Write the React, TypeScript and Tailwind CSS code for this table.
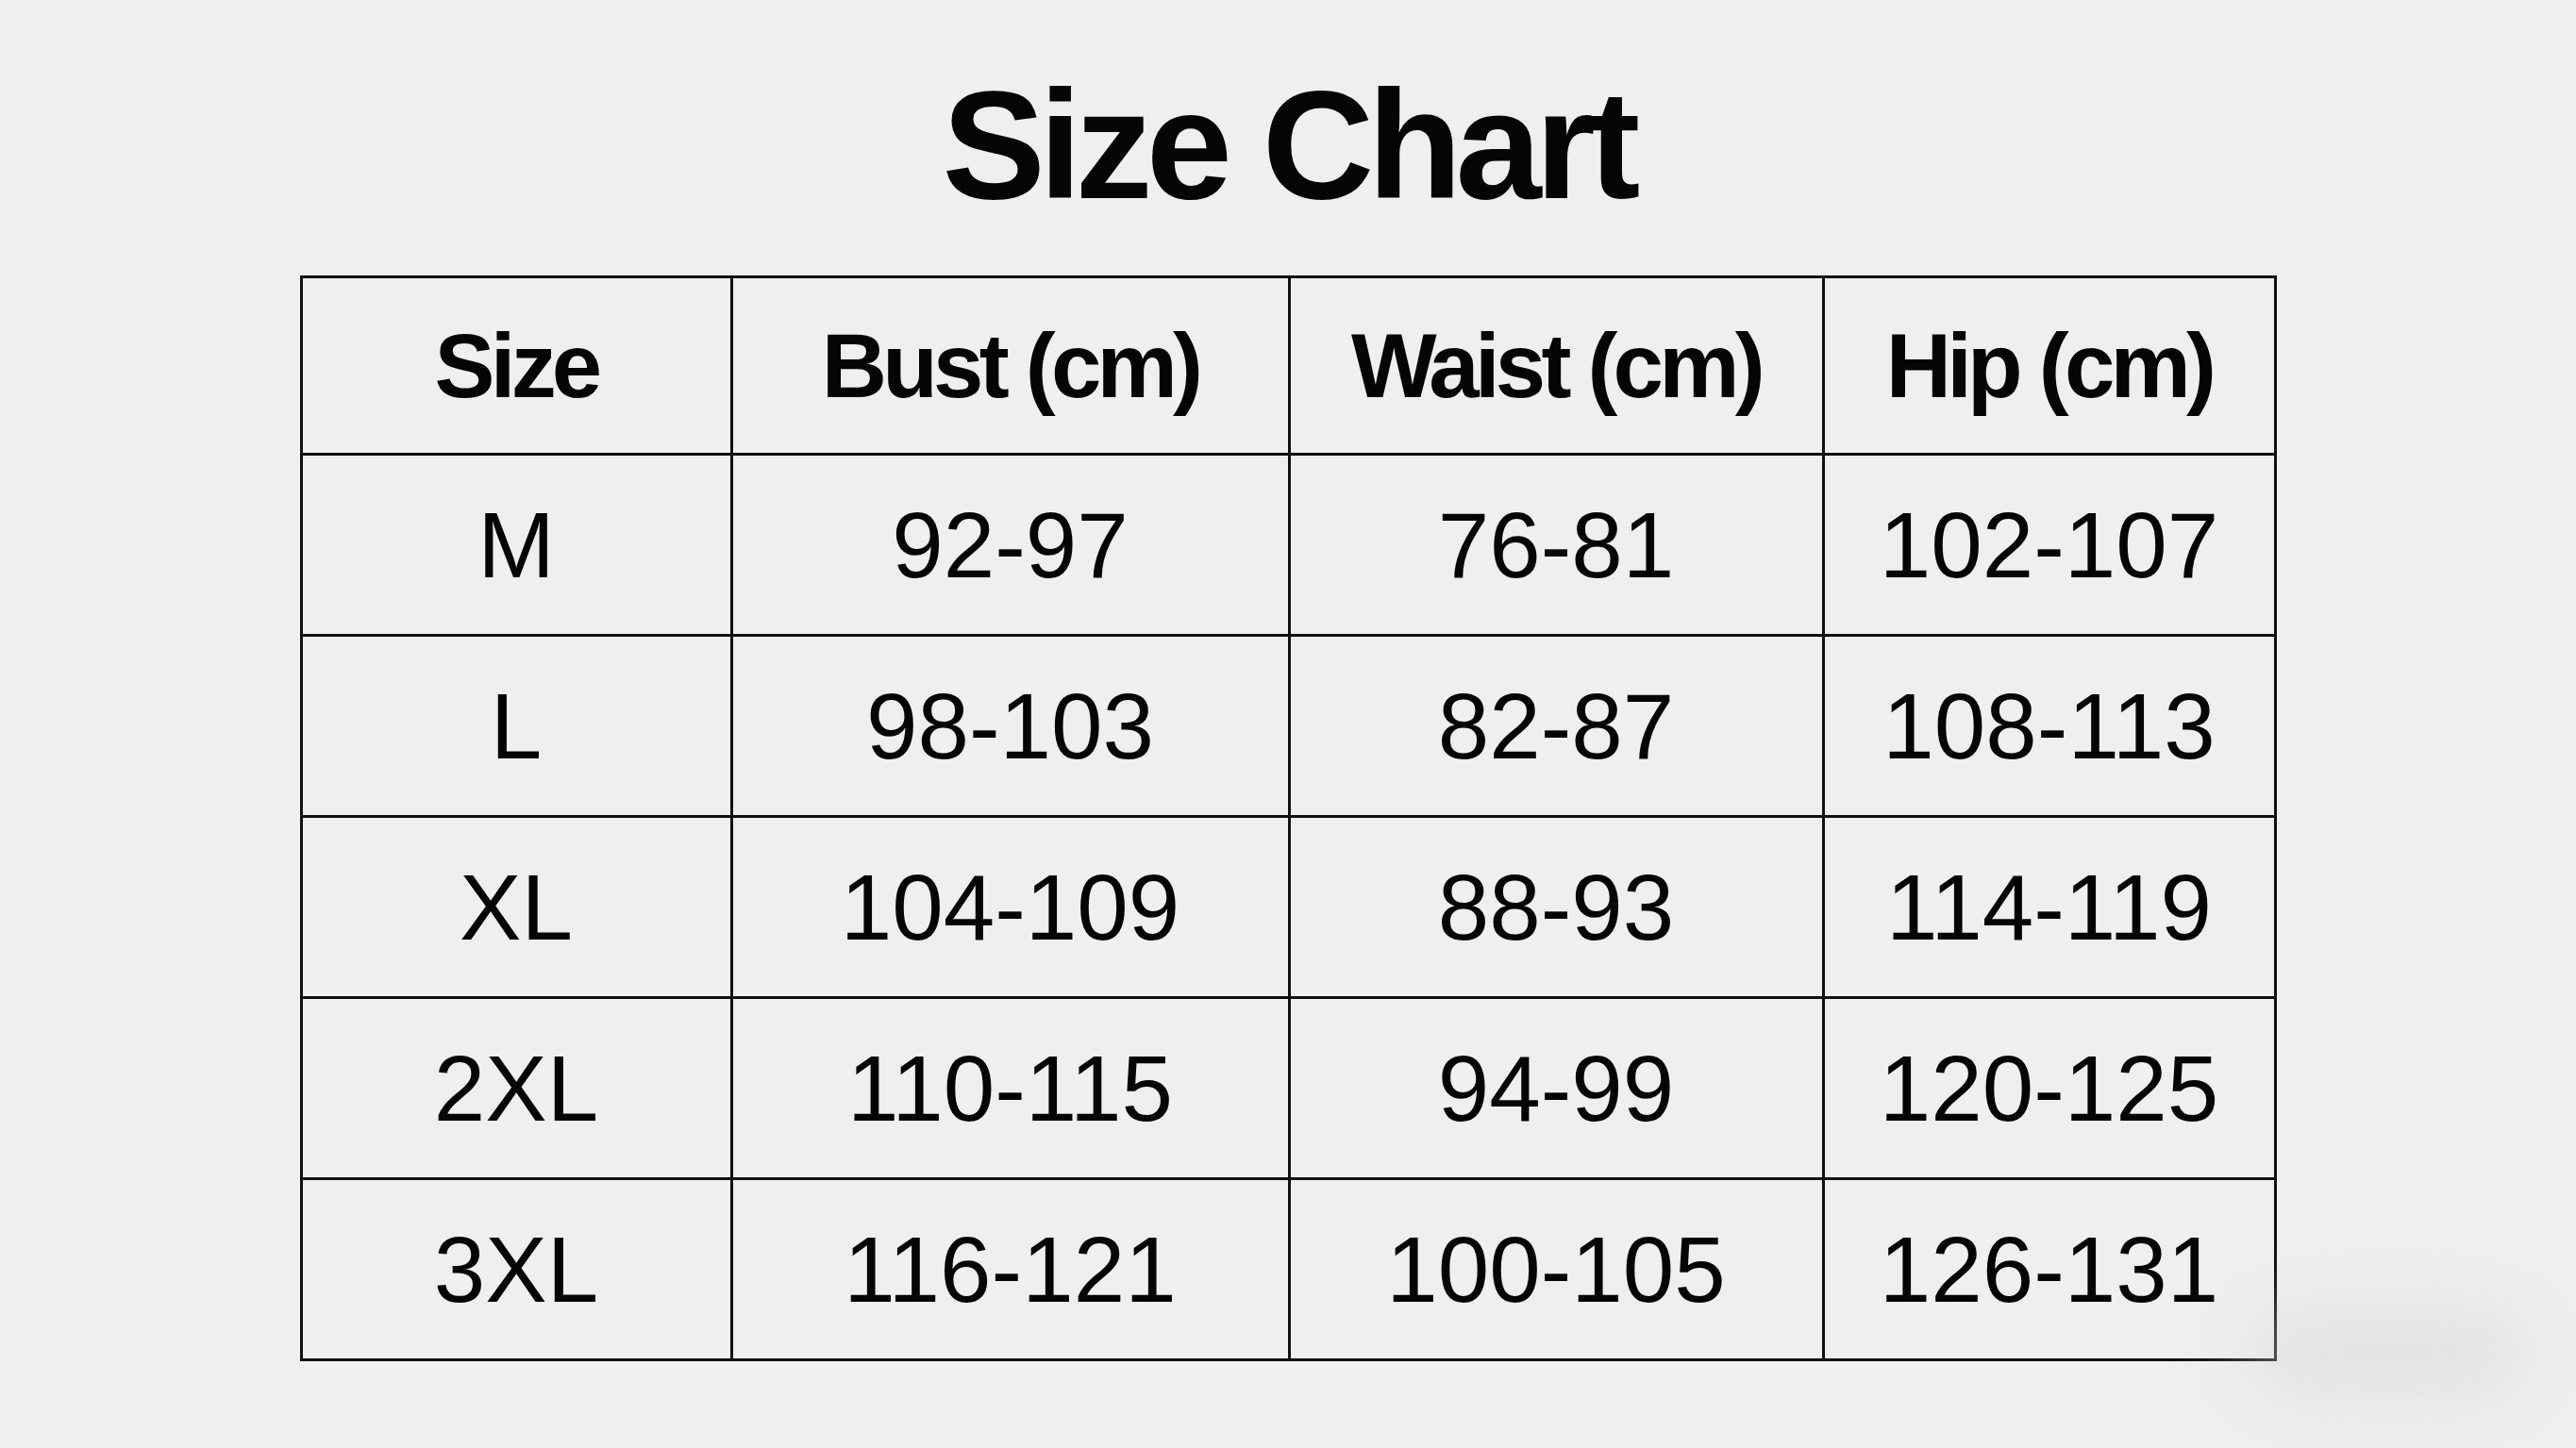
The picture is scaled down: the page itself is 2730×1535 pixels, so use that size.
import React from "react";

interface SizeRow {
  size: string;
  bust: string;
  waist: string;
  hip: string;
}

const rows: SizeRow[] = [
  { size: "M", bust: "92-97", waist: "76-81", hip: "102-107" },
  { size: "L", bust: "98-103", waist: "82-87", hip: "108-113" },
  { size: "XL", bust: "104-109", waist: "88-93", hip: "114-119" },
  { size: "2XL", bust: "110-115", waist: "94-99", hip: "120-125" },
  { size: "3XL", bust: "116-121", waist: "100-105", hip: "126-131" },
];

const headers = ["Size", "Bust (cm)", "Waist (cm)", "Hip (cm)"];

const App: React.FC = () => {
  return (
    <div
      className="relative min-h-screen w-full overflow-hidden bg-[#efefee] text-[#050505] flex flex-col items-center"
      style={{ fontFamily: '"Liberation Sans", Arial, Helvetica, sans-serif' }}
    >
      <h1 className="pt-[72px] text-[164px] font-bold leading-none tracking-[-0.042em]">
        Size Chart
      </h1>

      <table className="mt-[56px] w-[2092px] table-fixed border-collapse border-[3px] border-[#101010]">
        <colgroup>
          <col className="w-[456px]" />
          <col className="w-[591px]" />
          <col className="w-[566px]" />
          <col className="w-[479px]" />
        </colgroup>
        <thead>
          <tr className="h-[188px]">
            {headers.map((h) => (
              <th
                key={h}
                className="border-[3px] border-[#101010] text-center align-middle text-[96px] font-bold leading-none tracking-[-0.05em]"
              >
                {h}
              </th>
            ))}
          </tr>
        </thead>
        <tbody>
          {rows.map((row) => (
            <tr key={row.size} className="h-[192px]">
              {[row.size, row.bust, row.waist, row.hip].map((v, i) => (
                <td
                  key={i}
                  className="border-[3px] border-[#101010] text-center align-middle text-[98px] font-normal leading-none"
                >
                  {v}
                </td>
              ))}
            </tr>
          ))}
        </tbody>
      </table>

      {/* faint smudge at the bottom right corner of the photo */}
      <div className="pointer-events-none absolute left-[2380px] top-[1395px] h-[80px] w-[300px] rounded-full bg-[#d6d6d5] opacity-60 blur-2xl" />
    </div>
  );
};

export default App;
